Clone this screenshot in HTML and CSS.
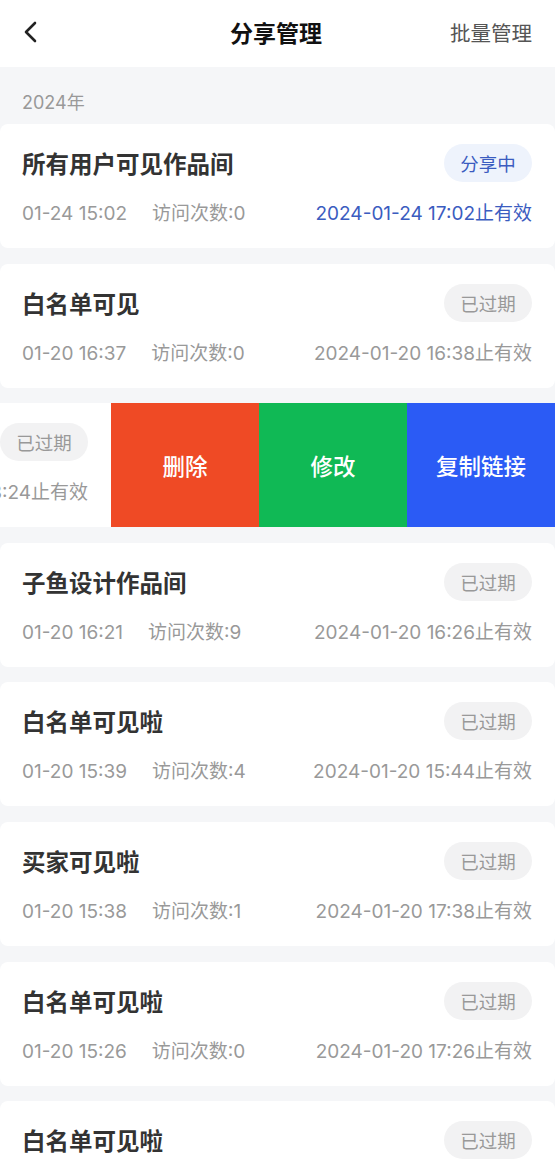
FILE: index.html
```html
<!doctype html>
<html lang="zh-CN">
  <head>
    <meta charset="utf-8">
    <meta name="viewport" content="width=device-width, initial-scale=1">
    <title>分享管理</title>
    <link rel="stylesheet" href="styles.css">
  </head>
  <body>

    <header class="topbar">
      <div class="back">
        <svg width="16" height="24" viewBox="0 0 16 24">
          <polyline points="13,3 4,12 13,21" fill="none" stroke="#222" stroke-width="2.6" stroke-linecap="round" stroke-linejoin="round"/>
        </svg>
      </div>
      <div class="title">分享管理</div>
      <div class="batch">批量管理</div>
    </header>

    <main class="list">
      <div class="year">2024年</div>

      <div class="card">
        <div class="row-top">
          <div class="name">所有用户可见作品间</div>
          <span class="badge active">分享中</span>
        </div>
        <div class="row-meta">
          <span class="time">01-24 15:02</span>
          <span class="visits">访问次数:0</span>
          <span class="expire active">2024-01-24 17:02止有效</span>
        </div>
      </div>

      <div class="card">
        <div class="row-top">
          <div class="name">白名单可见</div>
          <span class="badge">已过期</span>
        </div>
        <div class="row-meta">
          <span class="time">01-20 16:37</span>
          <span class="visits">访问次数:0</span>
          <span class="expire">2024-01-20 16:38止有效</span>
        </div>
      </div>

      <!-- 左滑后露出操作按钮 -->
      <div class="swipe">
        <div class="card shifted">
          <div class="row-top">
            <div class="name">白名单可见</div>
            <span class="badge">已过期</span>
          </div>
          <div class="row-meta">
            <span class="time">01-20 16:23</span>
            <span class="visits">访问次数:2</span>
            <span class="expire">2024-01-20 18:24止有效</span>
          </div>
        </div>
        <div class="act del">删除</div>
        <div class="act edit">修改</div>
        <div class="act copy">复制链接</div>
      </div>

      <div class="card">
        <div class="row-top">
          <div class="name">子鱼设计作品间</div>
          <span class="badge">已过期</span>
        </div>
        <div class="row-meta">
          <span class="time">01-20 16:21</span>
          <span class="visits">访问次数:9</span>
          <span class="expire">2024-01-20 16:26止有效</span>
        </div>
      </div>

      <div class="card">
        <div class="row-top">
          <div class="name">白名单可见啦</div>
          <span class="badge">已过期</span>
        </div>
        <div class="row-meta">
          <span class="time">01-20 15:39</span>
          <span class="visits">访问次数:4</span>
          <span class="expire">2024-01-20 15:44止有效</span>
        </div>
      </div>

      <div class="card">
        <div class="row-top">
          <div class="name">买家可见啦</div>
          <span class="badge">已过期</span>
        </div>
        <div class="row-meta">
          <span class="time">01-20 15:38</span>
          <span class="visits">访问次数:1</span>
          <span class="expire">2024-01-20 17:38止有效</span>
        </div>
      </div>

      <div class="card">
        <div class="row-top">
          <div class="name">白名单可见啦</div>
          <span class="badge">已过期</span>
        </div>
        <div class="row-meta">
          <span class="time">01-20 15:26</span>
          <span class="visits">访问次数:0</span>
          <span class="expire">2024-01-20 17:26止有效</span>
        </div>
      </div>

      <div class="card">
        <div class="row-top">
          <div class="name">白名单可见啦</div>
          <span class="badge">已过期</span>
        </div>
        <div class="row-meta">
          <span class="time">01-20 15:20</span>
          <span class="visits">访问次数:0</span>
          <span class="expire">2024-01-20 17:20止有效</span>
        </div>
      </div>
    </main>

  </body>
</html>
```

FILE: styles.css
```css
* {
  margin: 0;
  padding: 0;
  box-sizing: border-box;
}

body {
  font-family: "Inter", "Noto Sans CJK SC", sans-serif;
  background-color: #f5f6f8;
  width: 555px;
  overflow: hidden;
}

.topbar {
  height: 67px;
  background-color: #fff;
  display: flex;
  align-items: center;
  padding: 0 23px 4px 22px;
}
.back {
  width: 60px;
  display: flex;
  align-items: center;
}
.back svg {
  display: block;
}
.title {
  flex: 1;
  text-align: center;
  font-size: 23px;
  font-weight: 700;
  color: #111;
  padding-left: 28px;
}
.batch {
  width: 90px;
  text-align: right;
  font-size: 20.5px;
  color: #555;
  white-space: nowrap;
}

.year {
  padding: 24px 22px 9px;
  font-size: 18px;
  line-height: 24px;
  color: #999;
}

.card {
  background-color: #fff;
  border-radius: 8px;
  height: 124px;
  padding: 20px 23px 0 22px;
  margin-bottom: 15.6px;
}

.row-top {
  height: 38px;
  display: flex;
  align-items: center;
  justify-content: space-between;
}
.name {
  font-size: 23.5px;
  font-weight: 700;
  color: #333;
  white-space: nowrap;
}
.badge {
  width: 88px;
  height: 38px;
  border-radius: 19px;
  background-color: #f2f2f3;
  color: #999;
  font-size: 18.5px;
  display: flex;
  align-items: center;
  justify-content: center;
}
.badge.active {
  background-color: #eef3fc;
  color: #3b5cc0;
}

.row-meta {
  margin-top: 20px;
  display: flex;
  align-items: center;
  font-size: 19px;
  line-height: 24px;
  color: #999;
  white-space: nowrap;
}
.visits {
  margin-left: 25px;
}
.expire {
  margin-left: auto;
}
.expire.active {
  color: #3b5cc0;
}

.swipe {
  display: flex;
  height: 124px;
  margin-bottom: 15.6px;
  overflow: hidden;
}
.card.shifted {
  flex: 0 0 555px;
  margin-left: -444px;
  margin-bottom: 0;
  border-radius: 8px 0 0 8px;
}
.act {
  flex: 0 0 148px;
  display: flex;
  align-items: center;
  justify-content: center;
  color: #fff;
  font-size: 22.5px;
  font-weight: 500;
}
.del {
  background-color: #ef4a25;
}
.edit {
  background-color: #10b955;
}
.copy {
  background-color: #2b5bf5;
}
```
